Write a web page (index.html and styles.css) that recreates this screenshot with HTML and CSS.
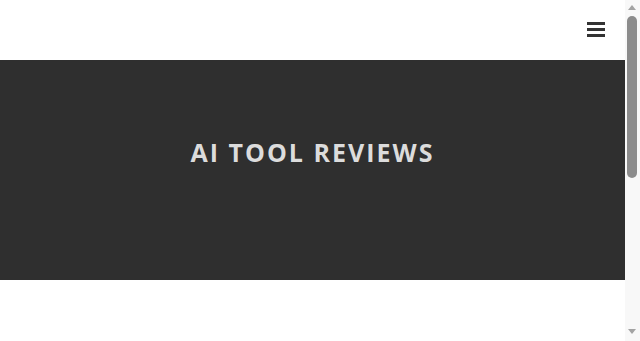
FILE: index.html
```html
<!DOCTYPE html>
<html lang="en">
<head>
  <meta charset="UTF-8">
  <meta name="viewport" content="width=device-width, initial-scale=1.0">
  <title>AI Tool Reviews</title>
  <link rel="stylesheet" href="styles.css">
</head>
<body>
  <div class="page">
    <header class="site-header">
      <button class="menu-toggle" aria-label="Menu">
        <span></span>
        <span></span>
        <span></span>
      </button>
    </header>

    <section class="hero">
      <h1>AI Tool Reviews</h1>
    </section>

    <main class="content"></main>
  </div>

  <!-- scrollbar as the browser drew it -->
  <div class="scrollbar">
    <span class="arrow up"></span>
    <span class="thumb"></span>
    <span class="arrow down"></span>
  </div>
</body>
</html>
```

FILE: styles.css
```css
body {
  font-family: 'Open Sans', 'Liberation Sans', sans-serif;
  margin: 0;
  padding: 0;
  background-color: #fff;
}
.page {
  margin-right: 15px;
}
.site-header {
  height: 60px;
  display: flex;
  justify-content: flex-end;
  align-items: center;
  padding: 0 20px;
  background-color: #fff;
}
.menu-toggle {
  width: 18px;
  height: 15px;
  padding: 0;
  border: none;
  background: none;
  display: flex;
  flex-direction: column;
  justify-content: space-between;
  cursor: pointer;
  margin-top: -1px;
}
.menu-toggle span {
  display: block;
  height: 3px;
  background-color: #333;
}
.hero {
  height: 220px;
  background-color: #2f2f2f;
  display: flex;
  justify-content: center;
  padding-top: 72px;
  box-sizing: border-box;
}
h1 {
  margin: 0;
  font-size: 25px;
  font-weight: 700;
  letter-spacing: 2px;
  text-transform: uppercase;
  color: #dcdcdc;
  line-height: 40px;
}
.content {
  height: 380px;
}
.scrollbar {
  position: fixed;
  top: 0;
  right: 0;
  bottom: 0;
  width: 15px;
  background-color: #f8f8f8;
  box-sizing: border-box;
}
.thumb {
  position: absolute;
  top: 16px;
  left: 2px;
  width: 10px;
  height: 162px;
  border-radius: 5px;
  background-color: #8c8c8c;
}
.arrow {
  position: absolute;
  left: 3px;
  width: 0;
  height: 0;
  border-left: 4px solid transparent;
  border-right: 4px solid transparent;
}
.arrow.up {
  top: 5px;
  border-bottom: 5px solid #a3a3a3;
}
.arrow.down {
  bottom: 7px;
  border-top: 5px solid #a3a3a3;
}
```
